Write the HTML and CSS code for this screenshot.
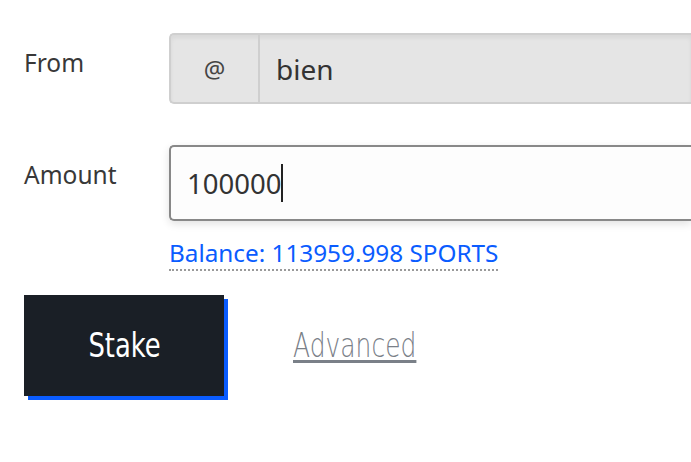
FILE: index.html
```html
<!DOCTYPE html>
<html>
<head>
<meta charset="utf-8">
<link rel="stylesheet" href="styles.css">
</head>
<body>
<form class="form">
  <div class="row">
    <label class="label">From</label>
    <div class="group">
      <span class="addon">@</span>
      <div class="field field-disabled">bien</div>
    </div>
  </div>
  <div class="row row-amount">
    <label class="label">Amount</label>
    <div class="col">
      <div class="field field-amount"><span>100000</span><span class="caret"></span></div>
      <a class="balance">Balance: 113959.998 SPORTS</a>
    </div>
  </div>
  <div class="actions">
    <button class="stake" type="button"><span class="stake-text">Stake</span></button>
    <a class="advanced"><span class="advanced-text">Advanced</span></a>
  </div>
</form>
</body>
</html>
```
FILE: styles.css
```css
html, body {
  margin: 0;
  padding: 0;
  background: #ffffff;
  overflow: hidden;
}
body {
  font-family: "Noto Sans", "Open Sans", sans-serif;
  color: #333333;
  width: 691px;
  height: 462px;
}
.form {
  padding: 33px 0 0 24px;
  display: flex;
  flex-direction: column;
}
.row {
  display: flex;
  align-items: flex-start;
}
.label {
  width: 145px;
  flex: none;
  font-size: 24.5px;
  line-height: 30px;
  color: #383838;
  padding-top: 15px;
}
.group {
  display: flex;
  flex: 1;
  height: 71px;
  box-sizing: border-box;
  border: 2px solid #cfcfcf;
  border-right: none;
  border-radius: 5px 0 0 5px;
  background: #e5e5e5;
  box-shadow: inset 0 3px 4px rgba(0,0,0,0.06);
}
.addon {
  width: 87px;
  flex: none;
  border-right: 2px solid #cfcfcf;
  display: flex;
  align-items: center;
  justify-content: center;
  font-size: 24px;
  color: #444;
}
.field {
  flex: 1;
  display: flex;
  align-items: center;
  font-size: 28px;
  color: #333;
}
.field-disabled {
  padding-left: 16px;
}
.row-amount {
  margin-top: 41px;
}
.row-amount .label {
  padding-top: 15px;
}
.col {
  flex: 1;
  display: flex;
  flex-direction: column;
  align-items: flex-start;
}
.field-amount {
  flex: none;
  width: 100%;
  height: 76px;
  box-sizing: border-box;
  border: 2px solid #888;
  border-right: none;
  border-radius: 5px 0 0 5px;
  background: #fdfdfd;
  padding-left: 16px;
  font-size: 27.5px;
  box-shadow: 0 3px 8px rgba(0,0,0,0.12);
}
.caret {
  display: inline-block;
  width: 2px;
  height: 38px;
  background: #222;
}
.balance {
  margin-top: 19px;
  font-size: 24.3px;
  line-height: 26px;
  color: #0a5cff;
  border-bottom: 2px dotted #9a9a9a;
  padding-bottom: 3px;
}
.actions {
  display: flex;
  align-items: center;
  margin-top: 24px;
}
.stake {
  width: 200px;
  height: 101px;
  border: none;
  background: #1a1f26;
  color: #fff;
  font-family: "DejaVu Sans Condensed", "DejaVu Sans", sans-serif;
  font-size: 33px;
  box-shadow: 4px 4px 0 #0a5cff;
  padding: 0;
}
.stake-text {
  display: inline-block;
  transform: scaleX(0.87);
}
.advanced {
  margin-left: 69px;
  color: #7a8088;
}
.advanced-text {
  display: inline-block;
  font-family: "DejaVu Sans", sans-serif;
  font-weight: 200;
  font-size: 33px;
  text-decoration: underline;
  text-decoration-thickness: 3px;
  text-underline-offset: 3px;
  transform: scaleX(0.757);
  transform-origin: left center;
}
```
